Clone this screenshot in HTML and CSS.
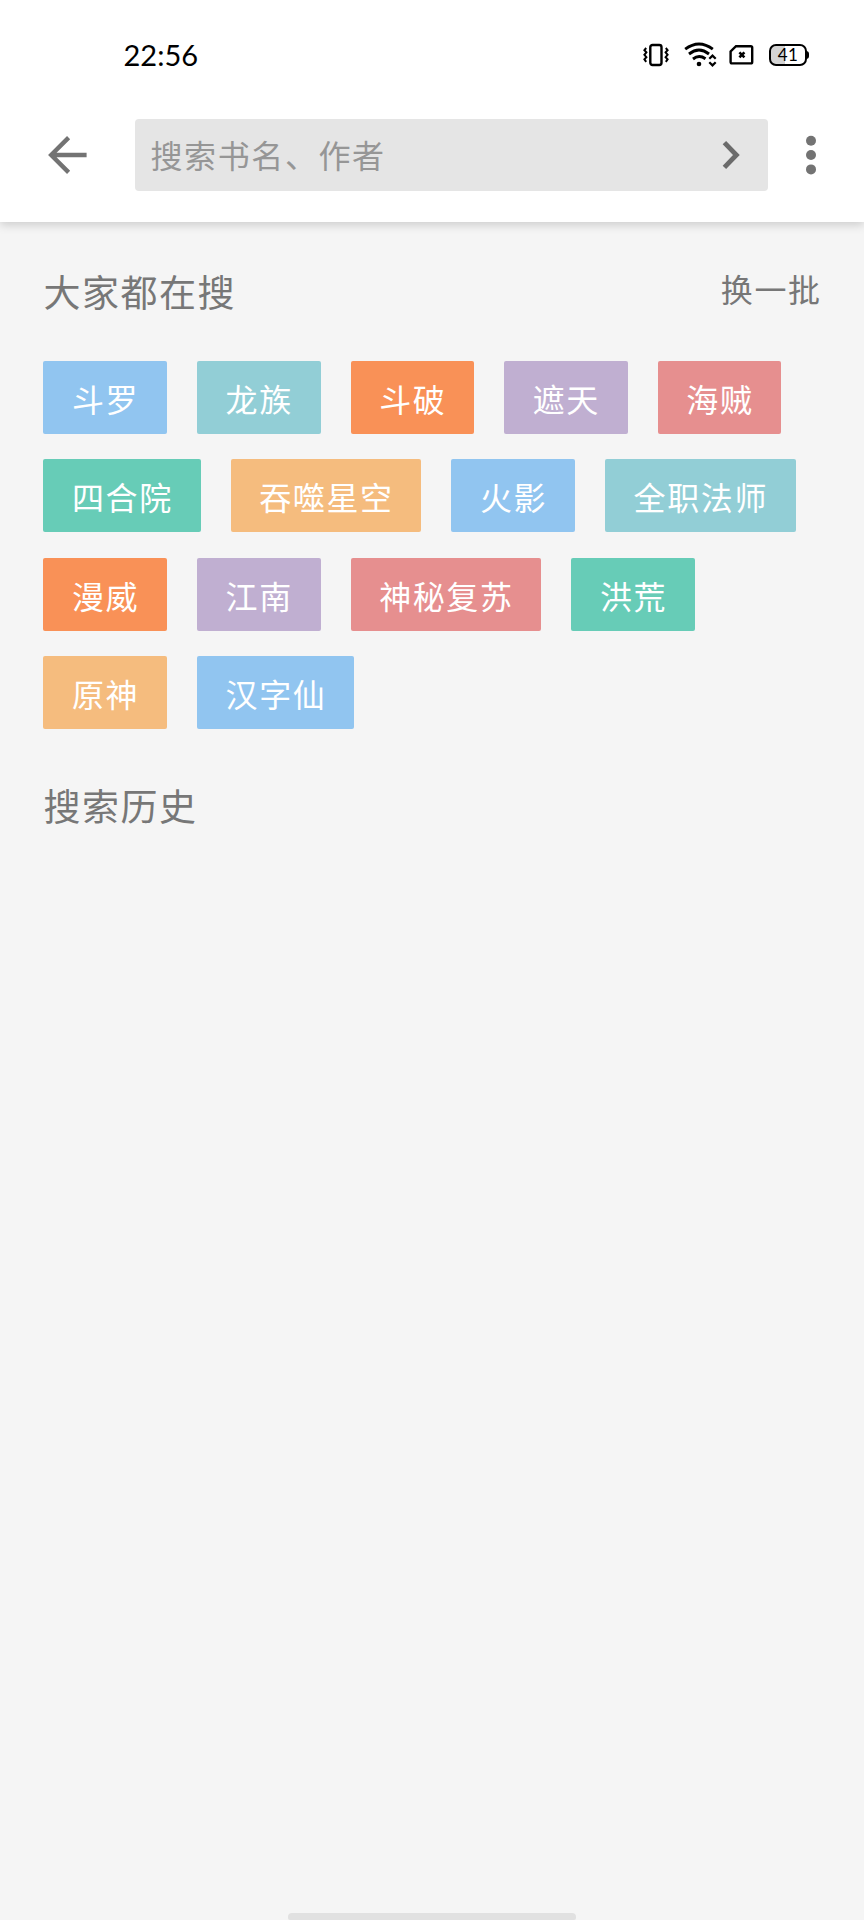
FILE: index.html
```html
<!DOCTYPE html>
<html lang="zh-CN">
<head>
    <meta charset="UTF-8">
    <title>搜索</title>
    <meta name="viewport" content="width=device-width, initial-scale=1.0">
    <link rel="stylesheet" href="styles.css">
</head>
<body>
    <header class="header">
        <div class="status-bar">
            <span class="time">22:56</span>
            <div class="status-icons">
                <!-- vibrate -->
                <svg class="icon-vibrate" width="26" height="24" viewBox="0 0 26 24" fill="none" stroke="#000">
                    <rect x="7.3" y="2" width="11.2" height="20" rx="2.2" stroke-width="2.4"/>
                    <path d="M3.2 5L1.4 7.2L3.4 9.4L1.4 11.8L3.4 14.2L1.4 16.4L3.2 18.8" stroke-width="2"/>
                    <path d="M22.8 5L24.6 7.2L22.6 9.4L24.6 11.8L22.6 14.2L24.6 16.4L22.8 18.8" stroke-width="2"/>
                </svg>
                <!-- wifi -->
                <svg class="icon-wifi" width="33" height="26" viewBox="0 0 33 26" fill="none" stroke="#000" stroke-width="2.9">
                    <path d="M1.2 7.2Q15 -3.2 28.8 7.2"/>
                    <path d="M5 12Q15 4.2 25 12"/>
                    <path d="M9 17Q15 12.3 21.5 16.8"/>
                    <circle cx="15" cy="22" r="2.3" fill="#000" stroke="none"/>
                    <path d="M25.3 16.8L28.5 13.6L31.7 16.8M25.3 20.2L28.5 23.4L31.7 20.2" stroke-width="2.2"/>
                </svg>
                <!-- no sim -->
                <svg class="icon-sim" width="25" height="22" viewBox="0 0 25 22" fill="none" stroke="#000">
                    <path d="M7 2.2H21.8Q23.2 2.2 23.2 3.6V18Q23.2 19.4 21.8 19.4H3Q1.6 19.4 1.6 18V7.5Z" stroke-width="2.4"/>
                    <path d="M10.4 8.4L15.4 13.4M15.4 8.4L10.4 13.4" stroke-width="2.6"/>
                </svg>
                <div class="battery"><span>41</span></div>
            </div>
        </div>
        <div class="toolbar">
            <svg class="back" width="40" height="40" viewBox="0 0 40 40" fill="none" stroke="#737373" stroke-width="4.4">
                <path d="M38.6 20H3.4M20.6 2.6L3.2 20L20.6 37.4"/>
            </svg>
            <div class="search-box">
                <span class="placeholder">搜索书名、作者</span>
                <svg width="18" height="30" viewBox="0 0 18 30" fill="none" stroke="#6b6b6b" stroke-width="4.8">
                    <path d="M2.4 2.6L14.4 15L2.4 27.4"/>
                </svg>
            </div>
            <svg class="more" width="10" height="40" viewBox="0 0 10 40" fill="#737373">
                <circle cx="5" cy="5.8" r="5"/>
                <circle cx="5" cy="20" r="5"/>
                <circle cx="5" cy="34.4" r="5"/>
            </svg>
        </div>
    </header>
    <main class="content">
        <div class="section-head">
            <h2>大家都在搜</h2>
            <span class="refresh">换一批</span>
        </div>
        <div class="tags">
            <span class="tag blue">斗罗</span>
            <span class="tag teal">龙族</span>
            <span class="tag orange">斗破</span>
            <span class="tag purple">遮天</span>
            <span class="tag red">海贼</span>
            <span class="tag green">四合院</span>
            <span class="tag yellow">吞噬星空</span>
            <span class="tag blue">火影</span>
            <span class="tag teal">全职法师</span>
            <span class="tag orange">漫威</span>
            <span class="tag purple">江南</span>
            <span class="tag red">神秘复苏</span>
            <span class="tag green">洪荒</span>
            <span class="tag yellow">原神</span>
            <span class="tag blue">汉字仙</span>
        </div>
        <h2 class="history">搜索历史</h2>
    </main>
    <div class="home-bar"></div>
</body>
</html>
```

FILE: styles.css
```css
* {
    box-sizing: border-box;
}
body {
    margin: 0;
    height: 1920px;
    display: flex;
    flex-direction: column;
    align-items: stretch;
    background: #f5f5f5;
    color: #777;
    font-family: "Noto Sans CJK SC", sans-serif;
    font-weight: 400;
    overflow: hidden;
}
svg {
    display: block;
    flex: none;
}
.header {
    height: 222px;
    background: #fff;
    box-shadow: 0 3px 9px rgba(0,0,0,0.17);
}
.status-bar {
    height: 110px;
    padding: 0 53px 0 123.5px;
    display: flex;
    align-items: center;
    justify-content: space-between;
    color: #000;
}
.time {
    font-family: Lato, sans-serif;
    font-size: 29px;
    line-height: 36px;
}
.status-icons {
    display: flex;
    align-items: center;
}
.icon-wifi {
    margin-left: 15px;
}
.icon-sim {
    margin-left: 12px;
}
.battery {
    width: 38px;
    height: 22px;
    margin: 0 4px 0 15px;
    border: 2.4px solid #000;
    border-radius: 7px;
    background: linear-gradient(to right, #d4d4d4 41%, #fff 41%);
    font-family: Lato, sans-serif;
    font-size: 17px;
    line-height: 18px;
    letter-spacing: 0.5px;
    text-align: center;
    position: relative;
}
.battery::after {
    content: "";
    position: absolute;
    right: -4px;
    top: 5px;
    width: 3px;
    height: 8px;
    border-radius: 0 3px 3px 0;
    background: #000;
}
.toolbar {
    height: 90px;
    padding: 0 48px 0 48px;
    display: flex;
    align-items: center;
}
.search-box {
    flex: 1;
    height: 72px;
    margin: 0 38px 0 46.5px;
    padding: 0 28px 2px 16px;
    display: flex;
    align-items: center;
    justify-content: space-between;
    border-radius: 4px;
    background: #e5e5e5;
}
.search-box svg {
    margin-top: 2px;
}
.placeholder {
    color: #969696;
    font-size: 32px;
    letter-spacing: 1.6px;
}
.content {
    flex: 1;
    padding: 42px 43.4px 0;
}
.section-head {
    height: 97px;
    margin-right: -1px;
    display: flex;
    justify-content: space-between;
    align-items: flex-start;
}
h2 {
    margin: 0;
    font-weight: 400;
    font-size: 37px;
    line-height: 54px;
    letter-spacing: 1.5px;
}
.refresh {
    font-size: 32px;
    line-height: 48px;
    letter-spacing: 1.6px;
}
.tags {
    display: flex;
    flex-wrap: wrap;
    gap: 25.3px 30px;
}
.tag {
    height: 73px;
    padding: 0 27.8px 0 28.6px;
    border-radius: 2px;
    color: #fff;
    font-size: 32px;
    line-height: 75px;
    letter-spacing: 1.6px;
}
.blue {
    background: #91c5f0;
}
.teal {
    background: #92ced6;
}
.orange {
    background: #f99157;
}
.purple {
    background: #c0afd1;
}
.red {
    background: #e68f8f;
}
.green {
    background: #67ccb7;
}
.yellow {
    background: #f5bc7e;
}
.history {
    margin-top: 49px;
}
.home-bar {
    flex: none;
    align-self: center;
    width: 288px;
    height: 7px;
    border-radius: 4px 4px 2px 2px;
    background: #e1e1e1;
}
```
